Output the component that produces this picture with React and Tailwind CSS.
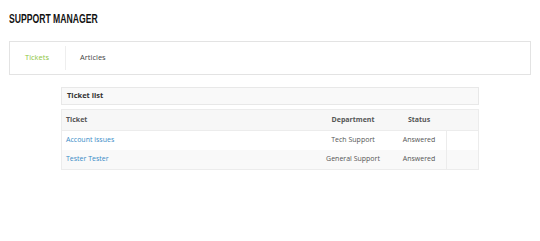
export default function App() {
  const rows = [
    { t: "Account issues", d: "Tech Support", s: "Answered", bg: "bg-white" },
    { t: "Tester Tester", d: "General Support", s: "Answered", bg: "bg-[#f9f9f9]" },
  ];
  return (
    <div className="w-[540px] h-[241px] bg-white overflow-hidden text-[#555]" style={{ fontFamily: '"Open Sans", sans-serif' }}>
      <div className="pl-[9px] pt-[12px] h-[41px]">
        <h1 className="text-[12.5px] leading-[14px] font-bold text-[#111] origin-left scale-x-[0.69] whitespace-nowrap" style={{ fontFamily: '"Liberation Sans", Arial, sans-serif' }}>
          SUPPORT MANAGER
        </h1>
      </div>
      <div className="mx-[9px] h-[34px] border border-[#e3e3e3] flex items-center text-[7.5px]">
        <div className="pl-[15px] pr-[16px] h-[24px] flex items-center border-r border-[#eeeeee] text-[#8dc63f]">Tickets</div>
        <div className="pl-[14px] text-[#444]">Articles</div>
      </div>
      <div className="mx-[61px] w-[418px] mt-[12px] h-[18px] border border-[#e8e8e8] bg-[#f9f9f9] flex items-center pl-[5px] text-[7.5px] font-bold text-[#333]">
        Ticket list
      </div>
      <div className="mx-[61px] w-[418px] mt-[4px] border border-[#ececec] text-[7px]">
        <div className="flex h-[21px] bg-[#f7f7f7] items-center font-bold text-[#555] border-b border-[#ececec]">
          <div className="w-[252px] pl-[4px]">Ticket</div>
          <div className="w-[78px] text-center">Department</div>
          <div className="w-[54px] text-center">Status</div>
          <div className="flex-1" />
        </div>
        {rows.map((r, i) => (
          <div key={i} className={`flex h-[19px] items-center ${r.bg}`}>
            <div className="w-[252px] pl-[4px] text-[#3a8cc7]">{r.t}</div>
            <div className="w-[78px] text-center">{r.d}</div>
            <div className="w-[54px] text-center">{r.s}</div>
            <div className="flex-1 h-full border-l border-[#ececec]" />
          </div>
        ))}
      </div>
    </div>
  );
}
